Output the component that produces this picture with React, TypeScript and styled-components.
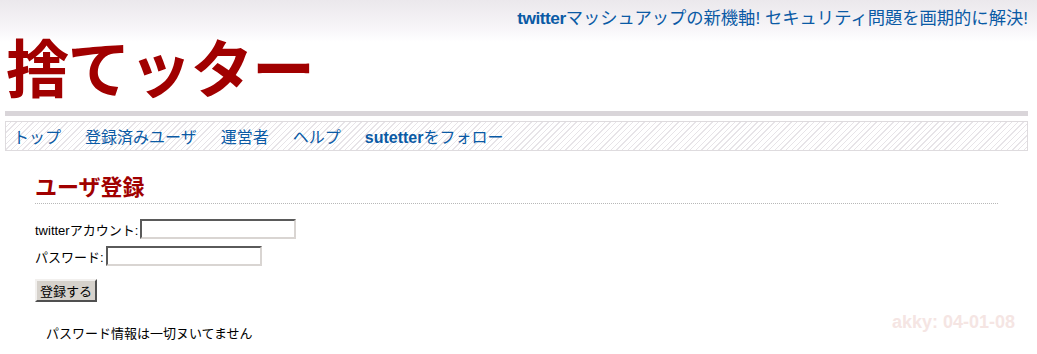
import styled, { createGlobalStyle } from 'styled-components'

const GlobalStyle = createGlobalStyle`
    body {
        margin: 0;
        background: #fff;
        font-family: "Liberation Sans", "Noto Sans CJK JP", sans-serif;
    }
`

const Page = styled.div`
    position: relative;
    width: 1037px;
    height: 354px;
    overflow: hidden;
    background: linear-gradient(#ebe8ec 0, #f7f5f8 28px, #fff 42px);
`

const Tagline = styled.div`
    text-align: right;
    padding: 7px 9px 0 0;
    height: 24px;
    font-size: 17.3px;
    line-height: 22px;
    color: #0a5aa5;
    & > b {
        font-family: "Liberation Sans", sans-serif;
        letter-spacing: -0.5px;
    }
`

const Logo = styled.h1`
    margin: 0;
    padding-left: 6px;
    height: 80px;
    font-size: 63px;
    line-height: 79px;
    font-weight: bold;
    color: #a10000;
    letter-spacing: -1.5px;
`

const Bar = styled.div`
    margin: 0 9px 0 5px;
    height: 5px;
    background: #d9d5d9;
`

const Nav = styled.ul`
    list-style: none;
    margin: 5px 9px 0 5px;
    padding: 0 0 0 7px;
    height: 28px;
    display: flex;
    align-items: center;
    gap: 24px;
    border: 1px solid #dedbde;
    background: repeating-linear-gradient(135deg, #fff 0 3px, #e7e4e8 3px 4px);
`

const NavItem = styled.li`
    font-size: 16px;
    color: #0a5aa5;
    & > b {
        font-family: "Liberation Sans", sans-serif;
    }
`

const Content = styled.div`
    padding: 24px 0 0 35px;
    font-size: 13px;
    color: #000;
`

const Heading = styled.h2`
    margin: 0 39px 0 0;
    padding-bottom: 2px;
    font-size: 22px;
    line-height: 26px;
    font-weight: bold;
    color: #a10000;
    border-bottom: 1px dotted #b8b8b8;
`

const Form = styled.form`
    margin-top: 15px;
    display: flex;
    flex-direction: column;
    align-items: flex-start;
    gap: 7px;
`

const Row = styled.label`
    display: flex;
    align-items: center;
    gap: 2px;
    height: 20px;
`

const TextInput = styled.input`
    box-sizing: border-box;
    width: 156px;
    height: 20px;
    margin: 0;
    border: 2px solid;
    border-color: #5a5a5a #d9d5d2 #d9d5d2 #5a5a5a;
    background: #fff;
`

const Button = styled.button`
    margin-top: 6px;
    box-sizing: border-box;
    height: 23px;
    padding: 0 3px;
    font-family: inherit;
    font-size: 13px;
    color: #000;
    background: #d6d2cc;
    border: 2px solid;
    border-color: #f2f0ee #505050 #505050 #f2f0ee;
`

const Note = styled.p`
    margin: 21px 0 0 11px;
    font-size: 13px;
`

const Stamp = styled.div`
    position: absolute;
    right: 22px;
    top: 312px;
    font-family: "Liberation Sans", sans-serif;
    font-weight: bold;
    font-size: 18px;
    color: #f5e5e3;
`

const navItems = ['トップ', '登録済みユーザ', '運営者', 'ヘルプ']

const App = () => {
    return (
        <Page>
            <GlobalStyle />
            <Tagline>
                <b>twitter</b>マッシュアップの新機軸! セキュリティ問題を画期的に解決!
            </Tagline>
            <Logo>捨てッター</Logo>
            <Bar />
            <Nav>
                {navItems.map(item => (
                    <NavItem key={item}>{item}</NavItem>
                ))}
                <NavItem><b>sutetter</b>をフォロー</NavItem>
            </Nav>
            <Content>
                <Heading>ユーザ登録</Heading>
                <Form onSubmit={e => e.preventDefault()}>
                    <Row>twitterアカウント: <TextInput type="text" /></Row>
                    <Row>パスワード: <TextInput type="password" /></Row>
                    <Button type="submit">登録する</Button>
                </Form>
                <Note>パスワード情報は一切ヌいてません</Note>
            </Content>
            <Stamp>akky: 04-01-08</Stamp>
        </Page>
    )
}

export default App
